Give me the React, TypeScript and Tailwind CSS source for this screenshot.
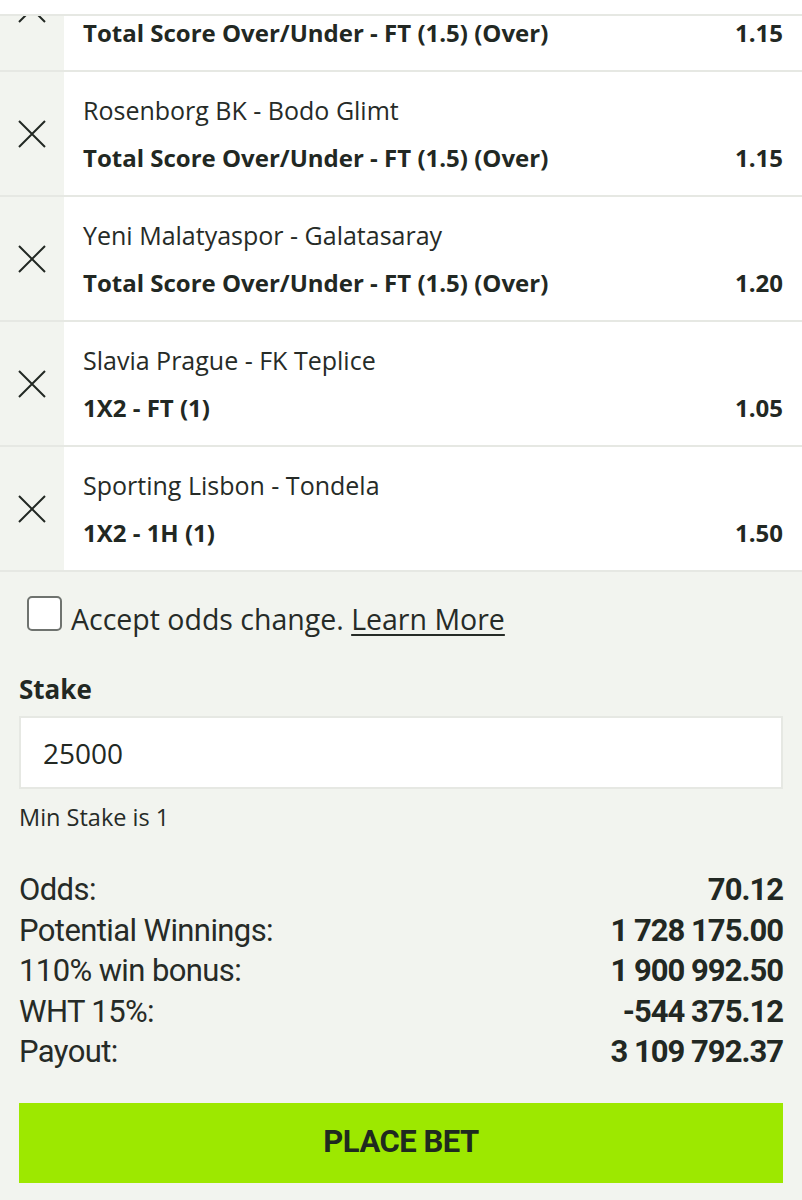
import React from 'react';

type Sel = { match: string; market: string; odds: string };

const SELECTIONS: Sel[] = [
  { match: 'Rosenborg BK - Bodo Glimt',       market: 'Total Score Over/Under - FT (1.5) (Over)', odds: '1.15' },
  { match: 'Yeni Malatyaspor - Galatasaray',  market: 'Total Score Over/Under - FT (1.5) (Over)', odds: '1.20' },
  { match: 'Slavia Prague - FK Teplice',      market: '1X2 - FT (1)',                             odds: '1.05' },
  { match: 'Sporting Lisbon - Tondela',       market: '1X2 - 1H (1)',                             odds: '1.50' },
];

const SUMMARY = [
  ['Odds:', '70.12'],
  ['Potential Winnings:', '1 728 175.00'],
  ['110% win bonus:', '1 900 992.50'],
  ['WHT 15%:', '-544 375.12'],
  ['Payout:', '3 109 792.37'],
];

function CloseIcon() {
  return (
    <svg width="28" height="28" viewBox="0 0 28 28" fill="none">
      <path d="M1 1L27 27M27 1L1 27" stroke="#222823" strokeWidth="2" />
    </svg>
  );
}

function SelectionRow({ sel }: { sel: Sel }) {
  return (
    <div className="flex h-[125px] border-b-2 border-[#e6e8e3]">
      <div className="w-16 shrink-0 flex items-center justify-center bg-[#f2f4ef]">
        <CloseIcon />
      </div>
      <div className="flex-1 bg-white pl-[19px] pr-[19px] flex flex-col justify-center">
        <div className="h-[30px] text-[25px] leading-[30px] text-[#262b27]">{sel.match}</div>
        <div className="flex justify-between mt-[18px] text-[24px] leading-[30px] font-bold text-[#222823]">
          <span>{sel.market}</span>
          <span>{sel.odds}</span>
        </div>
      </div>
    </div>
  );
}

export default function App() {
  return (
    <div className="w-[802px] h-[1200px] bg-[#f2f4ef] font-['Open_Sans','Noto_Sans',sans-serif] text-[#222823] overflow-hidden">
      {/* top strip */}
      <div className="h-[16px] bg-white border-b-2 border-[#e6e8e3]" />

      {/* first row, scrolled partly out of view */}
      <div className="h-[56px] overflow-hidden">
        <div className="-mt-[69px]">
          <SelectionRow sel={{ match: '', market: 'Total Score Over/Under - FT (1.5) (Over)', odds: '1.15' }} />
        </div>
      </div>

      {SELECTIONS.map(s => <SelectionRow key={s.match} sel={s} />)}

      {/* odds change */}
      <div className="flex items-center px-[27px] mt-[24px] h-[40px]">
        <span className="w-[35px] h-[35px] mb-[6px] rounded-[5px] border-2 border-[#6f736f] bg-white shrink-0" />
        <span className="ml-[9px] mt-[6px] text-[28.5px] text-[#262b27]">
          Accept odds change. <span className="underline underline-offset-4">Learn More</span>
        </span>
      </div>

      {/* stake */}
      <div className="px-[19px]">
        <div className="mt-[36px] text-[26px] font-bold leading-[34px]">Stake</div>
        <div className="mt-[10px] h-[73px] bg-white border-2 border-[#e6e8e3] flex items-center px-[22px] text-[28px]">
          25000
        </div>
        <div className="mt-[14px] text-[23.5px] leading-[28px] text-[#262b27]">Min Stake is 1</div>

        <div className="mt-[39px] flex flex-col">
          {SUMMARY.map(([label, value]) => (
            <div key={label} className="flex justify-between h-[40.5px] items-center font-['Roboto',sans-serif] text-[31px] tracking-[-0.6px]">
              <span className="text-[#262b27]">{label}</span>
              <span className="font-bold tracking-[-1px]">{value}</span>
            </div>
          ))}
        </div>

        <button className="mt-[30px] w-full h-[80px] bg-[#9de800] font-['Roboto',sans-serif] font-bold text-[31px] tracking-[-0.5px] text-[#1f2a1f]">
          PLACE BET
        </button>
      </div>
    </div>
  );
}
